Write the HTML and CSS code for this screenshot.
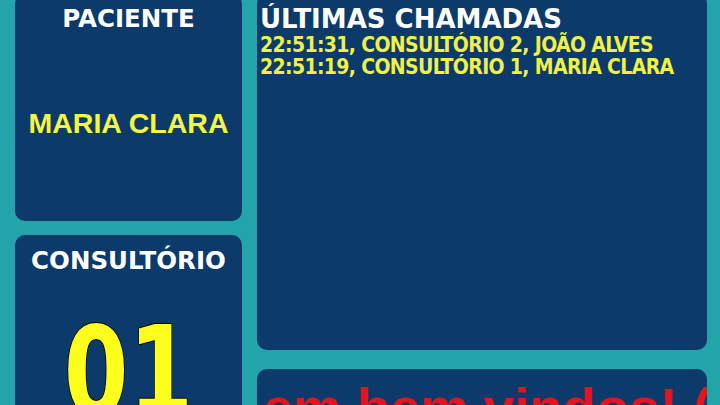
FILE: index.html
```html
<!DOCTYPE html>
<html lang="pt-BR">
<head>
<meta charset="utf-8">
<title>Painel de chamadas</title>
<link rel="stylesheet" href="styles.css">
</head>
<body>
<div class="screen">
  <div class="col col-left">
    <section class="card card-patient">
      <h2 class="card-title">PACIENTE</h2>
      <p class="patient-name">MARIA CLARA</p>
    </section>
    <section class="card card-room">
      <h2 class="card-title">CONSULTÓRIO</h2>
      <p class="room-number">01</p>
    </section>
  </div>
  <div class="col col-right">
    <section class="card card-calls">
      <h1 class="calls-title">ÚLTIMAS CHAMADAS</h1>
      <ul class="calls-list">
        <li>22:51:31, CONSULTÓRIO 2, JOÃO ALVES</li>
        <li>22:51:19, CONSULTÓRIO 1, MARIA CLARA</li>
      </ul>
    </section>
    <section class="card card-ticker">
      <p class="ticker-text">em bem vindos! (</p>
    </section>
  </div>
</div>
</body>
</html>
```
FILE: styles.css
```css
html, body {
  margin: 0;
  height: 100%;
  overflow: hidden;
  background: #23a4ab;
}

.screen {
  display: grid;
  grid-template-columns: 227px 450px;
  column-gap: 15px;
  padding-left: 15px;
  margin-top: -6px;
  height: 440px;
}

.col {
  display: flex;
  flex-direction: column;
  min-height: 0;
}

.col-left { gap: 14px; }
.col-right { gap: 19px; }

.card {
  background: #0b3a6b;
  border-radius: 10px;
  overflow: hidden;
  margin: 0;
}

.card-patient { height: 227px; flex: none; text-align: center; padding-top: 11px; box-sizing: border-box; }
.card-room { flex: 1; text-align: center; padding-top: 12px; }
.card-calls { height: 356px; flex: none; padding: 11px 0 0 3px; box-sizing: border-box; }
.card-ticker { flex: 1; padding: 12px 0 0 6px; }

.card-title {
  margin: 0;
  font-family: "DejaVu Sans", Verdana, sans-serif;
  font-weight: bold;
  font-size: 24.5px;
  line-height: 28px;
  color: #ffffff;
}

.patient-name {
  margin: 74px 0 0;
  font-family: "Liberation Sans", Arial, sans-serif;
  font-weight: bold;
  font-size: 28.5px;
  line-height: 32px;
  color: #f6f63c;
}

.room-number {
  margin: 35px 0 0;
  font-family: "DejaVu Sans", Verdana, sans-serif;
  font-weight: bold;
  font-size: 124px;
  line-height: 1;
  color: #ffff1e;
  transform: scaleX(0.75);
  text-shadow: 1px 0 0 #000, -1px 0 0 #000, 0 1px 0 #000, 0 -1px 0 #000;
}

.calls-title {
  margin: 0;
  font-family: "DejaVu Sans", Verdana, sans-serif;
  font-weight: bold;
  font-size: 26px;
  line-height: 28px;
  color: #ffffff;
}

.calls-list {
  list-style: none;
  margin: 1px 0 0;
  padding: 0;
  font-family: "DejaVu Sans", Verdana, sans-serif;
  font-stretch: condensed;
  font-weight: bold;
  font-size: 21px;
  line-height: 22px;
  letter-spacing: -0.65px;
  color: #f0f048;
  white-space: nowrap;
}

.ticker-text {
  margin: 0;
  font-family: "Liberation Sans", Arial, sans-serif;
  font-weight: bold;
  font-size: 54.5px;
  line-height: 1;
  color: #e3141e;
  white-space: nowrap;
}
```
